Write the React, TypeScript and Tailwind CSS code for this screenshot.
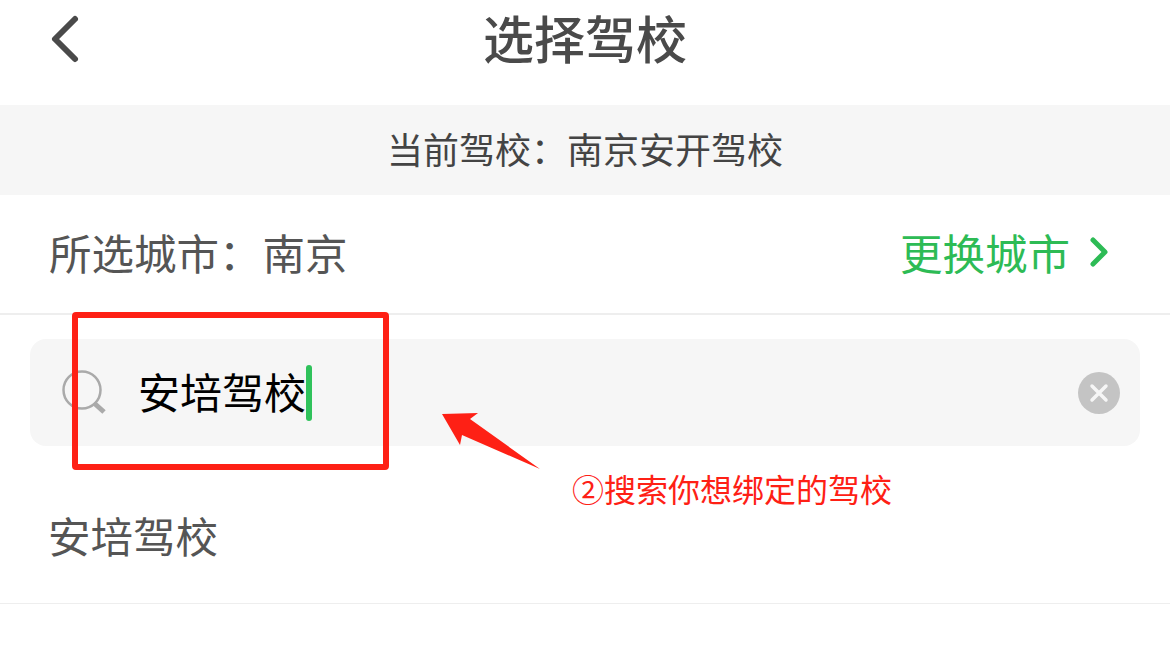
const cjk = "font-['Noto_Sans_CJK_SC','Noto_Sans',sans-serif]";

export default function App() {
  return (
    <div className={`relative w-[1170px] h-[668px] overflow-hidden bg-white ${cjk}`}>
      <header className="relative flex h-[105px] items-center justify-center pb-[31px]">
        <svg className="absolute left-[48px] top-[14px]" width="32" height="50" viewBox="0 0 32 50" fill="none">
          <path d="M27 5 L7 25 L27 45" stroke="#4a4a4a" strokeWidth="6" strokeLinecap="round" strokeLinejoin="round" />
        </svg>
        <h1 className="text-[51px] leading-none font-medium text-[#4a4a4a]">选择驾校</h1>
      </header>

      <div className="flex h-[90px] items-center justify-center bg-[#f6f6f6] pb-[4px] text-[36px] text-[#444444]">
        当前驾校：南京安开驾校
      </div>

      <div className="flex h-[120px] items-center justify-between border-b-2 border-[#eeeeee] pb-[4px] pl-[49px] pr-[62px] text-[42.5px]">
        <span className="text-[#555555]">所选城市：<span className="ml-[1px]">南京</span></span>
        <span className="flex items-center gap-[20px] text-[#2dbb55]">
          更换城市
          <svg width="18" height="32" viewBox="0 0 18 32" fill="none">
            <path d="M3 4 L15 16 L3 28" stroke="#2dbb55" strokeWidth="5" strokeLinecap="round" strokeLinejoin="round" />
          </svg>
        </span>
      </div>

      <div className="mx-[30px] mt-[24px] flex h-[107px] items-center rounded-[16px] bg-[#f6f6f6] pl-[31px] pr-[20px]">
        <svg width="46" height="46" viewBox="0 0 46 46" fill="none">
          <circle cx="21" cy="20" r="18.5" stroke="#aaaaaa" strokeWidth="2.5" />
          <path d="M33 33 L43 42" stroke="#aaaaaa" strokeWidth="5" />
        </svg>
        <span className="mb-[4px] ml-[31px] text-[42px] leading-none text-black">安培驾校</span>
        <span className="h-[56px] w-[6px] rounded-full bg-[#2fc25b]" />
        <span className="ml-auto flex size-[42px] items-center justify-center rounded-full bg-[#c4c4c4]">
          <svg width="20" height="20" viewBox="0 0 20 20" fill="none">
            <path d="M3 3 L17 17 M17 3 L3 17" stroke="#f6f6f6" strokeWidth="3.5" strokeLinecap="round" />
          </svg>
        </span>
      </div>

      <div className="flex h-[158px] items-center border-b border-[#eeeeee] pl-[48px] pt-[21px] text-[42.5px] text-[#555555]">
        安培驾校
      </div>

      {/* annotations on top of the screenshot */}
      <div className="absolute left-[72px] top-[312px] h-[158px] w-[317px] rounded-[4px] border-[6px] border-[#fe2015]" />
      <svg className="absolute left-[440px] top-[410px]" width="104" height="62" viewBox="440 410 104 62">
        <polygon points="442,414 478,413 470,419 540,469 462,435 460,445" fill="#fe2015" />
      </svg>
      <span className="absolute left-[572px] top-[466px] text-[32px] leading-[44px] whitespace-nowrap text-[#fe2015]">
        ②搜索你想绑定的驾校
      </span>
    </div>
  );
}
